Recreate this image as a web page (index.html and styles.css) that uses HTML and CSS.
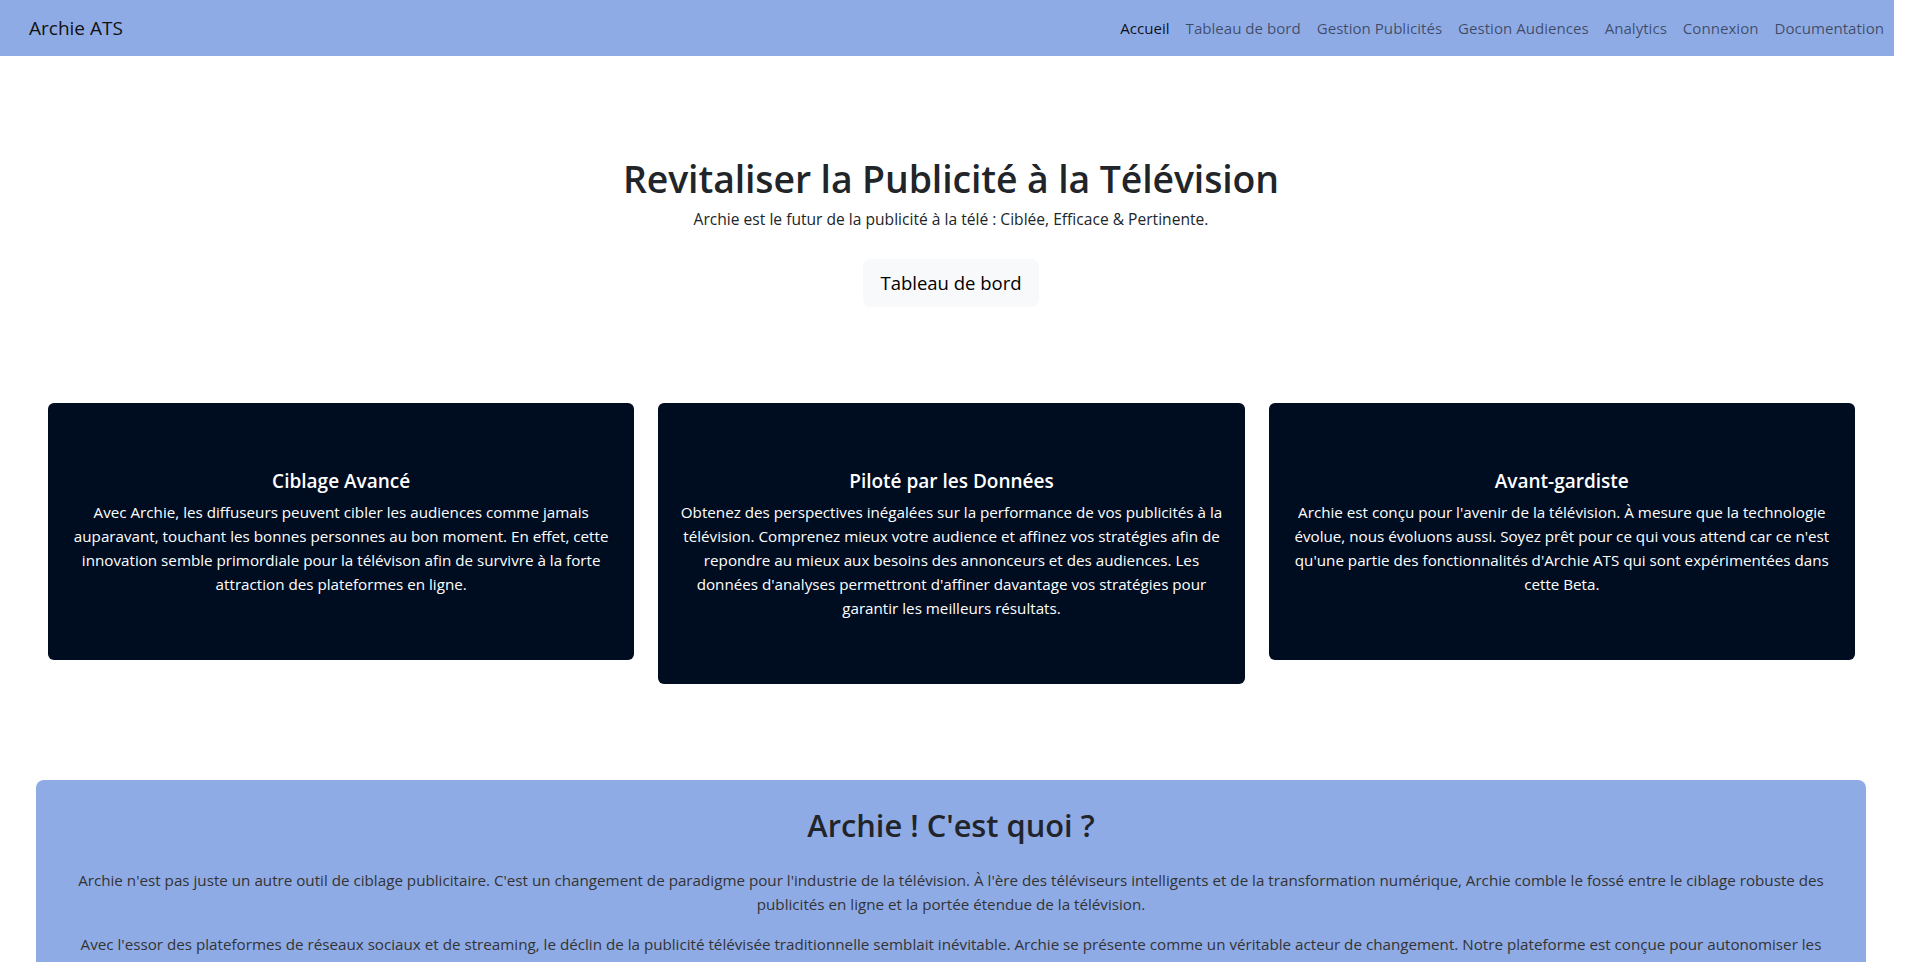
FILE: index.html
```html
<!DOCTYPE html>
<html lang="fr">
<head>
<meta charset="utf-8">
<title>Archie ATS</title>
<link rel="stylesheet" href="styles.css">
</head>
<body>
<nav class="navbar">
  <a class="brand" href="#">Archie ATS</a>
  <ul class="nav-links">
    <li><a class="nav-link active" href="#">Accueil</a></li>
    <li><a class="nav-link" href="#">Tableau de bord</a></li>
    <li><a class="nav-link" href="#">Gestion Publicités</a></li>
    <li><a class="nav-link" href="#">Gestion Audiences</a></li>
    <li><a class="nav-link" href="#">Analytics</a></li>
    <li><a class="nav-link" href="#">Connexion</a></li>
    <li><a class="nav-link" href="#">Documentation</a></li>
  </ul>
</nav>
<main class="page">
  <section class="hero">
    <h1 class="hero-title">Revitaliser la Publicité à la Télévision</h1>
    <p class="hero-sub">Archie est le futur de la publicité à la télé : Ciblée, Efficace &amp; Pertinente.</p>
    <a class="btn-light" href="#">Tableau de bord</a>
  </section>
  <section class="features">
    <div class="card">
      <h5 class="card-title">Ciblage Avancé</h5>
      <p class="card-text">Avec Archie, les diffuseurs peuvent cibler les audiences comme jamais auparavant, touchant les bonnes personnes au bon moment. En effet, cette innovation semble primordiale pour la télévison afin de survivre à la forte attraction des plateformes en ligne.</p>
    </div>
    <div class="card">
      <h5 class="card-title">Piloté par les Données</h5>
      <p class="card-text">Obtenez des perspectives inégalées sur la performance de vos publicités à la télévision. Comprenez mieux votre audience et affinez vos stratégies afin de repondre au mieux aux besoins des annonceurs et des audiences. Les données d'analyses permettront d'affiner davantage vos stratégies pour garantir les meilleurs résultats.</p>
    </div>
    <div class="card">
      <h5 class="card-title">Avant-gardiste</h5>
      <p class="card-text">Archie est conçu pour l'avenir de la télévision. À mesure que la technologie évolue, nous évoluons aussi. Soyez prêt pour ce qui vous attend car ce n'est qu'une partie des fonctionnalités d'Archie ATS qui sont expérimentées dans cette Beta.</p>
    </div>
  </section>
  <section class="about">
    <h2 class="about-title">Archie ! C'est quoi ?</h2>
    <p class="about-text">Archie n'est pas juste un autre outil de ciblage publicitaire. C'est un changement de paradigme pour l'industrie de la télévision. À l'ère des téléviseurs intelligents et de la transformation numérique, Archie comble le fossé entre le ciblage robuste des publicités en ligne et la portée étendue de la télévision.</p>
    <p class="about-text">Avec l'essor des plateformes de réseaux sociaux et de streaming, le déclin de la publicité télévisée traditionnelle semblait inévitable. Archie se présente comme un véritable acteur de changement. Notre plateforme est conçue pour autonomiser les diffuseurs, en leur offrant les outils nécessaires pour rivaliser dans un paysage médiatique en constante évolution.</p>
    <p class="about-text">Rejoignez-nous dans cette aventure et découvrez comment Archie peut transformer votre manière de concevoir la publicité télévisée.</p>
  </section>
</main>
</body>
</html>
```
FILE: styles.css
```css
* { box-sizing: border-box; }
html, body { margin: 0; padding: 0; }
body {
  font-family: "Open Sans", "Noto Sans", sans-serif;
  font-size: 15.2px;
  line-height: 1.5;
  color: #212529;
  background: #fff;
  padding-right: 11px;
}
a { text-decoration: none; }

.navbar {
  display: flex;
  align-items: center;
  justify-content: space-between;
  height: 56px;
  padding: 0 2px 0 29px;
  background: #8fabe6;
}
.brand {
  font-size: 19px;
  line-height: 30px;
  color: #111;
}
.nav-links {
  display: flex;
  list-style: none;
  margin: 0;
  padding: 0;
}
.nav-link {
  display: block;
  padding: 8px 8px;
  font-size: 15.1px;
  line-height: 24px;
  color: rgba(0, 0, 0, 0.57);
}
.nav-link.active { color: rgba(0, 0, 0, 0.92); }

.page {
  padding: 0 28px 40px 36px;
}
.hero {
  display: flex;
  flex-direction: column;
  align-items: center;
  padding-top: 99px;
}
.hero-title {
  margin: 0 0 4px;
  font-size: 37.4px;
  line-height: 48px;
  font-weight: 600;
  letter-spacing: -0.1px;
}
.hero-sub {
  margin: 0 0 28px;
  font-size: 15.6px;
  line-height: 24px;
  font-weight: 500;
}
.btn-light {
  display: inline-block;
  padding: 8px 16px;
  font-size: 18.5px;
  line-height: 30px;
  color: #000;
  background: #f8f9fa;
  border: 1px solid #f8f9fa;
  border-radius: 8px;
}

.features {
  display: grid;
  grid-template-columns: repeat(3, 1fr);
  gap: 24px;
  align-items: start;
  padding: 96px 11px 0 12px;
}
.card {
  background: #000d21;
  color: #fff;
  border-radius: 6px;
  padding: 66px 16px 64px;
  text-align: center;
}
.card-title {
  margin: 0 0 7px;
  font-size: 19px;
  line-height: 24px;
  font-weight: 600;
}
.card-text {
  margin: 0;
  font-size: 15.2px;
  line-height: 24px;
}

.about {
  margin-top: 96px;
  background: #8fabe6;
  border-radius: 8px;
  padding: 26px 24px 24px;
  text-align: center;
}
.about-title {
  margin: 0 0 24px;
  font-size: 30.8px;
  line-height: 38px;
  font-weight: 600;
}
.about-text {
  margin: 0 0 16px;
  font-size: 15.2px;
  line-height: 24px;
  color: #333;
}
```
